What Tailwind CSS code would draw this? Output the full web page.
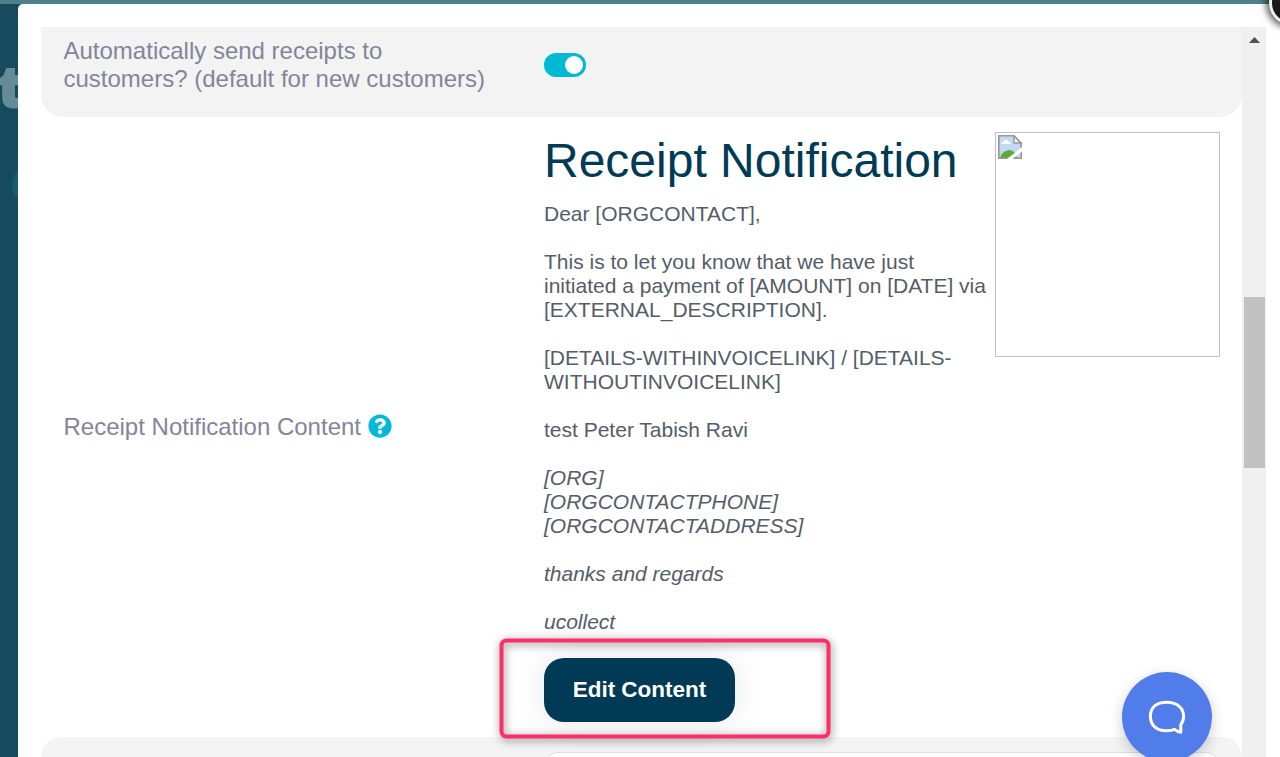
<!DOCTYPE html>
<html lang="en">

<head>
    <meta charset="UTF-8">
    <meta name="viewport" content="width=device-width, initial-scale=1.0">
    <title>Receipt Settings</title>
    <script src="https://cdn.jsdelivr.net/npm/@tailwindcss/browser@4"></script>
</head>

<body>
    <div class="relative h-[757px] overflow-hidden bg-[#154b5c] font-['Liberation_Sans',Arial,sans-serif]">
        <!-- dimmed page behind the modal -->
        <div class="h-1 bg-[#4f808a]"></div>
        <span class="absolute -left-[2px] top-[53px] text-[56px] leading-[64px] font-extrabold font-['Open_Sans',sans-serif] text-[#658b96] [-webkit-text-stroke:2px_#658b96]">t</span>
        <div class="absolute left-3 top-[165px] size-10 rounded-full bg-[#1b5a70]"></div>

        <main class="relative ml-[18px] flex h-[753px] overflow-hidden rounded-tl-[5px] bg-white pl-[23px] pt-[23px]">
            <div class="w-[1201px] shrink-0">
                <section class="flex h-[90px] rounded-b-[22px] bg-[#f3f3f3] pl-[22.5px] pt-[10px]">
                    <p class="w-[480.5px] text-[24px] leading-7 text-[#83859a]">Automatically send receipts to<br>customers? (default for new customers)</p>
                    <button type="button" title="toggle" class="mt-4 flex h-6 w-[42px] items-center justify-end rounded-full bg-[#00bad5] pr-[3px]">
                        <span class="size-[18px] rounded-full bg-white"></span>
                    </button>
                </section>

                <section class="flex h-[620px] items-center pl-[22.5px]">
                    <div class="flex w-[480.5px] items-center gap-[6.5px] text-[24px] leading-7 text-[#83859a]">
                        <span>Receipt Notification Content</span>
                        <svg class="mb-[2px] size-6" viewBox="0 0 512 512" fill="#00bad5">
                            <path d="M504 256c0 136.997-111.043 248-248 248S8 392.997 8 256C8 119.083 119.043 8 256 8s248 111.083 248 248zM262.655 90c-54.497 0-89.255 22.957-116.549 63.758-3.536 5.286-2.353 12.415 2.715 16.258l34.699 26.31c5.205 3.947 12.621 3.008 16.665-2.122 17.864-22.658 30.113-35.797 57.303-35.797 20.429 0 45.698 13.148 45.698 32.958 0 14.976-12.363 22.667-32.534 33.976C247.128 238.528 216 254.941 216 296v4c0 6.627 5.373 12 12 12h56c6.627 0 12-5.373 12-12v-1.333c0-28.462 83.186-29.647 83.186-106.667 0-58.002-60.165-102-116.531-102zM256 338c-25.365 0-46 20.635-46 46 0 25.364 20.635 46 46 46s46-20.636 46-46c0-25.364-20.635-46-46-46z" />
                        </svg>
                    </div>
                    <div class="flex h-full w-[676px] flex-col pt-[15px]">
                        <div class="flex h-[503px] justify-between">
                            <div class="w-[446px]">
                                <h1 class="mb-3 text-[48px] leading-[58px] whitespace-nowrap text-[#003a55]">Receipt Notification</h1>
                                <div class="space-y-6 text-[21px] leading-6 text-[#545d69]">
                                    <p>Dear [ORGCONTACT],</p>
                                    <p>This is to let you know that we have just<br>initiated a payment of [AMOUNT] on [DATE] via<br>[EXTERNAL_DESCRIPTION].</p>
                                    <p>[DETAILS-WITHINVOICELINK] / [DETAILS-<br>WITHOUTINVOICELINK]</p>
                                    <p>test Peter Tabish Ravi</p>
                                    <p class="italic">[ORG]<br>[ORGCONTACTPHONE]<br>[ORGCONTACTADDRESS]</p>
                                    <p class="italic">thanks and regards</p>
                                    <p class="italic">ucollect</p>
                                </div>
                            </div>
                            <!-- missing logo -->
                            <div class="size-[225px] shrink-0 border border-[#c0c0c0] p-[2px]">
                                <svg class="size-6" viewBox="0 0 24 24">
                                    <path d="M.8.8H16L23.2 8v15.2H.8z" fill="#c6d7f5" />
                                    <path d="M3 9q0-2 2.5-2Q6.500 4 8.500 4.500T11 7q2 0 2 2z" fill="#fff" />
                                    <path d="M2 23q2-7 9-8 6 0 8 8z" fill="#57ae36" />
                                    <path d="M.8.8H16L23.2 8v15.2H.8z" fill="none" stroke="#989898" stroke-width="1.6" />
                                    <path d="M16 1v7h7z" fill="#f4f4f4" stroke="#989898" stroke-width="1.4" />
                                    <path d="M24 12v4.500L14.500 24H9z" fill="#fff" />
                                </svg>
                            </div>
                        </div>
                        <div class="mt-[23px]">
                            <button type="button" class="h-16 w-[191px] rounded-[20px] bg-[#003a55] text-[22.5px] font-bold text-white shadow-[0_0_30px_rgba(0,0,0,0.1)]">Edit Content</button>
                        </div>
                    </div>
                </section>

                <section class="h-5 overflow-hidden rounded-t-[20px] bg-[#f3f3f3] pl-[503px] pt-[15px]">
                    <div class="h-16 w-[676px] rounded-[14px] border border-[#dedede] bg-white"></div>
                </section>
            </div>

            <!-- scrollbar -->
            <div class="flex h-[730px] w-6 shrink-0 flex-col items-center bg-[#f0f0f0] pt-[10px]">
                <svg class="h-[6px] w-[12px]" viewBox="0 0 12 6" fill="#505050">
                    <path d="M6.500 0L12 6H1z" />
                </svg>
                <div class="mt-[254px] ml-[1px] h-[171px] w-[21px] bg-[#c1c1c1]"></div>
            </div>
        </main>

        <!-- callout around the button -->
        <svg class="pointer-events-none absolute left-[490px] top-[629px] h-[124px] w-[355px] drop-shadow-[1px_2px_4px_rgba(0,0,0,0.5)]" viewBox="0 0 355 124" fill="none">
            <rect x="11.5" y="11.5" width="327" height="96" rx="5" stroke="#ff2e69" stroke-width="4" />
        </svg>

        <!-- close button -->
        <div class="absolute -top-[19px] left-[1269px] size-[44px] rounded-full border-[3px] border-[#eeeeee] bg-[#1a1a1a] shadow-[0_0_7px_3px_rgba(0,0,0,0.65)]"></div>

        <!-- chat launcher -->
        <button type="button" title="chat" class="absolute left-[1122px] top-[672px] flex size-[90px] items-center justify-center rounded-full bg-[#517deb] shadow-[0_4px_14px_rgba(0,0,0,0.2)]">
            <svg class="mt-[3px] size-10" viewBox="0 0 40 40" fill="none" stroke="#fff" stroke-width="3" stroke-linejoin="round">
                <path d="M33.800 25.500V33.200Q30 32.500 27.500 30.300C25 31.700 22.500 31.800 19.500 31.800 9.500 31.800 3.400 26 3.400 17.600 3.400 8.500 9.500 3.200 20 3.200S36.600 9.500 36.600 17.300C36.600 20.500 36 23 33.800 25.500z" />
            </svg>
        </button>
    </div>
</body>

</html>
